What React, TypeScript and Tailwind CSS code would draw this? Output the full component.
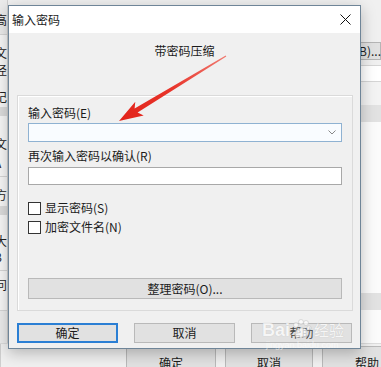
import React from "react";

function LeftStrip() {
  return (
    <div className="w-[8px] h-full overflow-hidden flex flex-col border-r border-[#cfcfcf]">
      <div className="-ml-[5px] w-[20px] flex flex-col leading-[16px] text-[12px] text-[#222]">
        <div className="h-[34px] bg-[#ebebeb] pt-[12px]">高</div>
        <div className="h-[73px] bg-[#f7f7f7] border-t border-[#d6d6d6] pt-[10px] flex flex-col">
          <span>文</span>
          <span className="mt-[1px]">径</span>
          <span className="mt-[11px]">记</span>
        </div>
        <div className="h-[9px] bg-[#dcdcdc]" />
        <div className="h-[60px] bg-[#f7f7f7] pt-[20px] flex flex-col">
          <span>文</span>
          <span className="mt-[3px] -ml-[1px]">A</span>
        </div>
        <div className="h-[30px] bg-[#f7f7f7] border-t border-[#d6d6d6] pt-[10px]">方</div>
        <div className="h-[9px] bg-[#dcdcdc]" />
        <div className="h-[55px] bg-[#f7f7f7] pt-[18px] flex flex-col">
          <span>大</span>
          <span className="-ml-[1px]">B</span>
        </div>
        <div className="h-[40px] bg-[#f7f7f7] border-t border-[#d6d6d6] pt-[6px]">问</div>
        <div className="h-[40px] bg-[#ececec] border-t border-[#d6d6d6]" />
      </div>
    </div>
  );
}

function RightStrip() {
  return (
    <div className="w-[51px] h-full flex flex-col">
      <div className="h-[42px] bg-[#f0f0f0]" />
      <div className="h-[18px] bg-[#e1e1e1] border border-[#b5b5b5] pl-[24px] text-[12px] leading-[16px] whitespace-nowrap text-[#222]">
        (B)...
      </div>
      <div className="h-[5px]" />
      <div className="h-[17px] bg-white border-y border-[#d5d5d5]" />
      <div className="h-[23px] bg-[#f3f3f3]" />
      <div className="h-[17px] bg-[#e2e2e2]" />
      <div className="h-[171px] bg-[#fbfbfb]" />
      <div className="h-[17px] bg-[#e2e2e2]" />
      <div className="flex-1 bg-[#fbfbfb]" />
    </div>
  );
}

function Btn({ children, def, className = "" }: { children: React.ReactNode; def?: boolean; className?: string }) {
  return (
    <div
      className={
        "flex items-center justify-center bg-[#e1e1e1] text-[12px] leading-[16px] text-[#1b1b1b] " +
        (def ? "border-2 border-[#2b7fd4] " : "border border-[#b9b9b9] ") +
        className
      }
    >
      {children}
    </div>
  );
}

function Checkbox({ label }: { label: string }) {
  return (
    <div className="flex items-center h-[16px] gap-[4px]">
      <div className="w-[13px] h-[13px] border border-[#333] bg-white" />
      <span className="leading-[16px]">{label}</span>
    </div>
  );
}

export default function App() {
  return (
    <div className="relative w-[381px] h-[367px] overflow-hidden bg-[#f0f0f0] font-['Noto_Sans_CJK_SC',sans-serif] text-[12px] text-[#1b1b1b]">
      {/* background window */}
      <div className="flex flex-col h-full">
        <div className="flex h-[343px]">
          <LeftStrip />
          <div className="flex-1 bg-[#f0f0f0]" />
          <RightStrip />
        </div>
        <div className="flex h-[24px] bg-[#f0f0f0] border-t border-[#dcdcdc]">
          <div className="w-[8px] border-r border-[#cfcfcf]" />
          <div className="flex pl-[125px] gap-[9px] pt-[2px]">
            <Btn className="w-[90px] h-[30px]">
              <span className="mt-[4px]">确定</span>
            </Btn>
            <Btn className="w-[88px] h-[30px]">
              <span className="mt-[4px]">取消</span>
            </Btn>
            <Btn className="w-[90px] h-[30px] !justify-start pl-[32px]">
              <span className="mt-[4px]">帮助</span>
            </Btn>
          </div>
        </div>
      </div>

      {/* dialog */}
      <div className="absolute left-[8px] top-[5px] w-[353px] h-[344px] border border-[#6f8598] bg-[#f0f0f0] shadow-[0_4px_14px_rgba(0,0,0,0.25)] flex flex-col">
        <div className="h-[27px] bg-white flex items-center justify-between pl-[3px]">
          <span className="leading-[16px]">输入密码</span>
          <div className="w-[30px] h-full flex items-center justify-center">
            <svg width="11" height="11" viewBox="0 0 11 11">
              <path d="M0.5 0.5 L10.5 10.5 M10.5 0.5 L0.5 10.5" stroke="#111" strokeWidth="1" />
            </svg>
          </div>
        </div>
        <div className="text-center leading-[16px] mt-[10px]">带密码压缩</div>

        <div className="ml-[8px] mt-[36px] w-[336px] h-[216px] border border-[#dadada] shadow-[inset_1px_1px_0_#fff] pt-[9px] px-[10px] flex flex-col">
          <div className="leading-[16px]">输入密码(E)</div>
          <div className="mt-[2px] h-[19px] border border-[#8fb2d2] bg-[#f9fcff] flex items-center justify-end pr-[5px]">
            <svg width="8" height="5" viewBox="0 0 8 5">
              <path d="M0.5 0.5 L4 4 L7.5 0.5" stroke="#888" strokeWidth="1" fill="none" />
            </svg>
          </div>
          <div className="leading-[16px] mt-[6px]">再次输入密码以确认(R)</div>
          <div className="mt-[3px] h-[18px] border border-[#a8a8a8] bg-white" />
          <div className="mt-[15px]">
            <Checkbox label="显示密码(S)" />
          </div>
          <div className="mt-[3px]">
            <Checkbox label="加密文件名(N)" />
          </div>
          <Btn className="mt-[43px] h-[21px] w-full">整理密码(O)...</Btn>
        </div>

        <div className="flex ml-[8px] mt-[12px] gap-[16px]">
          <Btn def className="w-[101px] h-[20px]">确定</Btn>
          <Btn className="w-[101px] h-[20px]">取消</Btn>
          <Btn className="w-[101px] h-[20px] !text-[#444]">帮助</Btn>
        </div>
      </div>

      {/* watermark */}
      <div className="absolute left-[262px] top-[318px] flex flex-col items-start pointer-events-none opacity-70">
        <div className="flex items-end">
          <span className="text-[18px] font-bold leading-[20px] text-white [text-shadow:0_0_1px_#b0b0b0] font-['Liberation_Sans',sans-serif]">
            Bai
          </span>
          <svg width="24" height="22" viewBox="0 0 24 22">
            <g fill="#fff" stroke="#bdbdbd" strokeWidth="0.7">
              <circle cx="6" cy="7" r="2.5" />
              <circle cx="11" cy="4" r="2.5" />
              <circle cx="16" cy="5" r="2.5" />
              <circle cx="19" cy="10" r="2.2" />
              <path d="M5 17 C5 12 9 10 12 10 C16 10 18 13 18 16 C18 19 15 20 12 19 C9 20 5 20 5 17 Z" />
            </g>
          </svg>
          <span className="text-[15px] leading-[20px] text-white [text-shadow:0_0_1px_#b0b0b0]">
            经验
          </span>
        </div>
        <span className="ml-[4px] text-[9px] leading-[11px] text-white/80 font-['Liberation_Sans',sans-serif]">
          jingyan.baidu.com
        </span>
      </div>

      {/* red arrow */}
      <svg className="absolute inset-0 pointer-events-none" width="381" height="367" viewBox="0 0 381 367">
        <defs>
          <linearGradient id="ar" x1="226" y1="56" x2="119" y2="121" gradientUnits="userSpaceOnUse">
            <stop offset="0" stopColor="#f07a70" />
            <stop offset="0.5" stopColor="#e8352b" />
            <stop offset="1" stopColor="#e2231a" />
          </linearGradient>
        </defs>
        <polygon
          points="119,121 143.7,115.4 137.6,112.6 226.3,56.4 225.7,55.6 134.6,108.4 135.3,101.7"
          fill="url(#ar)"
        />
      </svg>
    </div>
  );
}
